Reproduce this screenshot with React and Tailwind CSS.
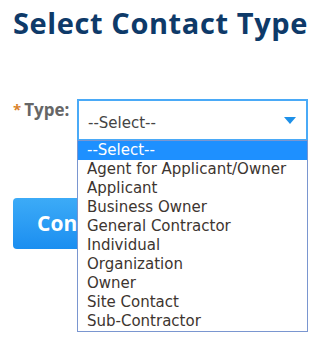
import React from 'react';

const OPTIONS = [
  '--Select--',
  'Agent for Applicant/Owner',
  'Applicant',
  'Business Owner',
  'General Contractor',
  'Individual',
  'Organization',
  'Owner',
  'Site Contact',
  'Sub-Contractor',
];

export default function App() {
  return (
    <div className="w-[333px] h-[346px] bg-white overflow-hidden pl-[13px] pt-[4px] font-['Open_Sans',sans-serif]">
      {/* Heading */}
      <h1 className="text-[29px] leading-[37px] font-bold tracking-[0.6px] text-[#0e3a69]">Select Contact Type</h1>

      {/* Type row */}
      <div className="flex items-start mt-[58px]">
        <div className="flex items-start w-[64px]">
          <span className="text-[#d9822b] font-bold text-[15px] leading-[20px] mr-[3px]">*</span>
          <span className="text-[#666] font-bold text-[17px] leading-[22px]">Type:</span>
        </div>
        <div className="relative">
          <div className="w-[231px] h-[42px] border-2 border-[#4aaaf7] bg-white flex items-center pl-[9px] pr-[10px] pt-[6px] font-['DejaVu_Sans',sans-serif] text-[15px] text-[#444]">
            <span className="flex-1">--Select--</span>
            <svg width="12" height="7" viewBox="0 0 12 7" className="mt-[-6px]">
              <polygon points="0,0 12,0 6,7" fill="#1e90e8" />
            </svg>
          </div>
          {/* Open list */}
          <ul className="absolute left-0 top-[41px] w-[231px] border border-[#7a96d0] bg-white font-['DejaVu_Sans',sans-serif] text-[15px] leading-[19px] text-[#3d3530] z-10">
            {OPTIONS.map((o, i) => (
              <li
                key={o}
                className={i === 0 ? 'bg-[#1e90ff] text-white pl-[9px] h-[19px]' : 'pl-[9px] h-[19px]'}
              >
                {o}
              </li>
            ))}
          </ul>
        </div>
      </div>

      {/* Continue button, partly hidden by the list */}
      <button className="mt-[57px] w-[140px] h-[51px] rounded-[4px] bg-gradient-to-b from-[#3cabf7] to-[#1a8ef0] text-white font-bold text-[21px] text-left pl-[24px]">
        Continue
      </button>
    </div>
  );
}
